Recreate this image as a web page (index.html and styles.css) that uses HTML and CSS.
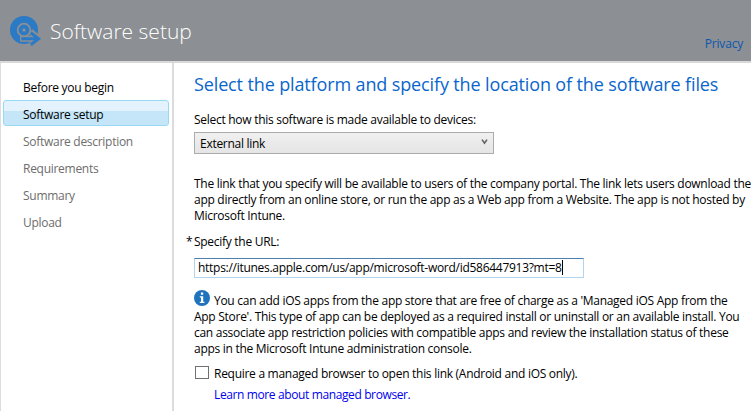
FILE: index.html
```html
<!DOCTYPE html>
<html lang="en">
<head>
<meta charset="utf-8">
<title>Software setup</title>
<link rel="stylesheet" href="styles.css">
</head>
<body>
<header class="banner">
  <svg class="logo" width="32" height="31" viewBox="0 0 32 31">
    <circle cx="14" cy="14" r="14" fill="#2b7ac5"/>
    <circle cx="14" cy="14" r="6.3" fill="none" stroke="#8c8f93" stroke-width="1.8"/>
    <circle cx="14" cy="14" r="1.7" fill="#8c8f93"/>
    <g fill="none">
      <path d="M10 22.7h18M20.5 15.5l8.2 7.2-8.2 7" stroke="#8c8f93" stroke-width="6"/>
      <path d="M11.3 22.7H28M20.8 16.8l7.8 5.9-7.8 6" stroke="#2b7ac5" stroke-width="3"/>
    </g>
  </svg>
  <h1 class="title">Software setup</h1>
  <a class="privacy">Privacy</a>
</header>
<div class="body">
  <nav class="steps">
    <a class="step done">Before you begin</a>
    <a class="step current">Software setup</a>
    <a class="step">Software description</a>
    <a class="step">Requirements</a>
    <a class="step">Summary</a>
    <a class="step">Upload</a>
  </nav>
  <main class="content">
    <h2 class="heading">Select the platform and specify the location of the software files</h2>
    <label class="label">Select how this software is made available to devices:</label>
    <div class="select"><span>External link</span>
      <svg class="chevron" width="7" height="6" viewBox="0 0 7 6"><path d="M1 .6l2.5 3.6L6 .6" fill="none" stroke="#606060" stroke-width="1.6"/></svg>
    </div>
    <p class="text intro">The link that you specify will be available to users of the company portal. The link lets users download the<br>app directly from an online store, or run the app as a Web app from a Website. The app is not hosted by<br>Microsoft Intune.</p>
    <label class="label url-label"><span class="star">*</span>Specify the URL:</label>
    <div class="input"><span>https://itunes.apple.com/us/app/microsoft-word/id586447913?mt=8</span><i class="caret"></i></div>
    <p class="text note"><svg class="info" width="16" height="16" viewBox="0 0 16 16"><circle cx="8" cy="8" r="8" fill="#1e73be"/><path d="M6.9 2.6h2.3v2.2H6.9zM5.8 6.2h3.4v5.6h1.2v1.3H5.8v-1.3H7V7.5H5.8z" fill="#fff"/></svg>You can add iOS apps from the app store that are free of charge as a 'Managed iOS App from the<br>App Store'. This type of app can be deployed as a required install or uninstall or an available install. You<br>can associate app restriction policies with compatible apps and review the installation status of these<br>apps in the Microsoft Intune administration console.</p>
    <div class="check"><span class="box"></span><span>Require a managed browser to open this link (Android and iOS only).</span></div>
    <a class="learn">Learn more about managed browser.</a>
  </main>
</div>
</body>
</html>
```
FILE: styles.css
```css
* { box-sizing: border-box; }
body {
  margin: 0;
  width: 751px;
  height: 411px;
  overflow: hidden;
  background: #fff;
  color: #000;
  font: 12px/16px "Open Sans", "Noto Sans", sans-serif;
  letter-spacing: -0.28px;
  white-space: nowrap;
}
h1, h2, p { margin: 0; font-weight: 400; }
.banner {
  display: flex;
  height: 63px;
  padding: 16px 8px 0 10px;
  background: #8c8f93;
  border-bottom: 2px solid #d9d9db;
}
.title {
  margin-left: 8px;
  font-size: 21px;
  line-height: 30px;
  font-weight: 300;
  letter-spacing: 0;
  color: #fff;
}
.privacy { margin: 20px 0 0 auto; letter-spacing: -0.2px; color: #0b57b0; }
.body { display: flex; height: 348px; border-left: 1px solid #dcdcde; }
.steps {
  flex: none;
  width: 173px;
  padding: 11px 3px 0 2px;
  border-right: 2px solid #dcdcde;
}
.step {
  display: block;
  height: 27px;
  padding-left: 20px;
  line-height: 27px;
  color: #6d6d6d;
}
.done, .current { color: #000; }
.current {
  height: 26px;
  margin: -1px 0 2px;
  padding-left: 19px;
  line-height: 27px;
  border: 1px solid #99d9f2;
  border-radius: 3px;
  background: linear-gradient(#e3f2fc 0 42%, #c5e6f9 42%);
}
.content { display: flex; flex: none; flex-direction: column; align-items: flex-start; padding: 9px 0 0 20px; }
.heading { font-size: 18px; line-height: 24px; letter-spacing: -0.13px; color: #0a66cc; }
.label { margin-top: 16px; }
.select {
  display: flex;
  justify-content: space-between;
  width: 300px;
  height: 22px;
  margin-top: 4px;
  padding: 3px 5px 1px;
  border: 1px solid #acacac;
  background: linear-gradient(#f0f0f0, #e5e5e5);
}
.chevron { margin-top: 3px; }
.intro { margin-top: 22px; }
.url-label { margin: 10px 0 0 -8px; }
.star { display: inline-block; width: 8px; }
.input {
  display: flex;
  width: 390px;
  height: 20px;
  margin-top: 8px;
  padding: 1px 3px;
  border: 1px solid #b3d4ec;
  border-top-color: #4a7fb0;
}
.caret { width: 1px; height: 15px; background: #000; }
.note { margin-top: 15px; }
.info { display: inline-block; margin: -8px 4px -2px 0; vertical-align: 1px; }
.check { display: flex; margin-top: 9px; }
.box { width: 14px; height: 13px; margin: 0 5px 0 1px; border: 1px solid #707070; }
.learn { margin: 5px 0 0 20px; letter-spacing: -0.38px; color: #0000f0; }
```
